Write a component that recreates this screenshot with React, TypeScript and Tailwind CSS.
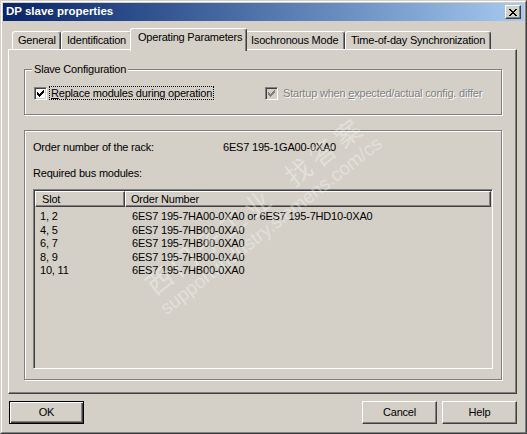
import React from 'react';

const raised =
  'border border-t-white border-l-white border-r-[#404040] border-b-[#404040] shadow-[inset_-1px_-1px_0_#808080]';
const etched = 'border border-[#808080] shadow-[inset_1px_1px_0_#fff,1px_1px_0_#fff]';
const sunken =
  'border border-t-[#808080] border-l-[#808080] border-r-white border-b-white shadow-[inset_1px_1px_0_#404040,inset_-1px_-1px_0_#d4d0c8]';

// classic 7x7 check mark, one column of 3px per x
const checkCols = [2, 3, 4, 3, 2, 1, 0];

const CheckBox = ({ disabled }: { disabled?: boolean }) => (
  <span
    className={`flex h-[13px] w-[13px] shrink-0 items-center justify-center ${sunken} ${
      disabled ? 'bg-[#d4d0c8]' : 'bg-white'
    }`}
  >
    <svg width="7" height="7" viewBox="0 0 7 7" shapeRendering="crispEdges">
      {checkCols.map((y, x) => (
        <rect key={x} x={x} y={y} width="1" height="3" fill={disabled ? '#808080' : '#000'} />
      ))}
    </svg>
  </span>
);

// 8x7 close glyph
const closeRows = [
  [0, 1, 6, 7],
  [1, 2, 5, 6],
  [2, 3, 4, 5],
  [3, 4],
  [2, 3, 4, 5],
  [1, 2, 5, 6],
  [0, 1, 6, 7],
];

const rows = [
  { slot: '1, 2', order: '6ES7 195-7HA00-0XA0 or 6ES7 195-7HD10-0XA0' },
  { slot: '4, 5', order: '6ES7 195-7HB00-0XA0' },
  { slot: '6, 7', order: '6ES7 195-7HB00-0XA0' },
  { slot: '8, 9', order: '6ES7 195-7HB00-0XA0' },
  { slot: '10, 11', order: '6ES7 195-7HB00-0XA0' },
];

const tabBase =
  'h-[18px] shrink-0 rounded-t-[3px] border-t border-l border-r border-t-white border-l-white border-r-[#404040] shadow-[inset_-1px_0_0_#808080] pl-[5px] pt-[2px] leading-[13px] whitespace-nowrap';

export default function App() {
  return (
    <div className="relative h-[434px] w-[527px] overflow-hidden bg-[#d4d0c8] font-['Liberation_Sans',Arial,sans-serif] text-[11px] tracking-[-0.2px] text-black select-none">
      <div className="flex h-full flex-col border border-t-[#d4d0c8] border-l-[#d4d0c8] border-r-[#404040] border-b-[#404040]">
        <div className="flex h-full flex-col border border-t-white border-l-white border-r-[#808080] border-b-[#808080] p-px">
          {/* Title bar */}
          <div className="flex h-[18px] shrink-0 items-center bg-gradient-to-r from-[#0a246a] to-[#a6caf0] pl-[3px]">
            <span className="flex-1 text-[11.5px] font-bold tracking-normal text-white">DP slave properties</span>
            <span className={`mr-[3px] flex h-[14px] w-[16px] items-center justify-center bg-[#d4d0c8] ${raised}`}>
              <svg width="8" height="7" viewBox="0 0 8 7" shapeRendering="crispEdges">
                {closeRows.map((xs, y) =>
                  xs.map((x) => <rect key={`${x}-${y}`} x={x} y={y} width="1" height="1" fill="#000" />)
                )}
              </svg>
            </span>
          </div>

          <div className="flex flex-1 flex-col px-[5px] pt-[7px]">
            {/* Tabs */}
            <div className="flex h-[21px] items-end pl-[4px]">
              <div className={`${tabBase} w-[49px]`}>General</div>
              <div className={`${tabBase} w-[71px]`}>Identification</div>
              <div className="relative z-10 -mx-[2px] -mb-[2px] h-[23px] w-[117px] shrink-0 rounded-t-[3px] border-t border-l border-r border-t-white border-l-white border-r-[#404040] bg-[#d4d0c8] pl-[7px] pt-[2px] leading-[13px] whitespace-nowrap shadow-[inset_-1px_0_0_#808080]">
                Operating Parameters
              </div>
              <div className={`${tabBase} w-[100px]`}>Isochronous Mode</div>
              <div className={`${tabBase} w-[146px]`}>Time-of-day Synchronization</div>
            </div>

            {/* Tab panel */}
            <div className={`h-[345px] w-[509px] pl-[15px] pt-[13px] ${raised}`}>
              <fieldset className={`w-[478px] px-[7px] pt-[10px] pb-[14px] ${etched}`}>
                <legend className="bg-[#d4d0c8] px-[2px] leading-[13px]">Slave Configuration</legend>
                <div className="flex h-[14px] items-center">
                  <div className="flex w-[233px] shrink-0 items-center pl-[2px]">
                    <CheckBox />
                    <span className="ml-[2px] border border-dotted border-black px-[1px] leading-[12px] whitespace-nowrap">
                      <span className="underline">R</span>eplace modules during operation
                    </span>
                  </div>
                  <div className="flex items-center">
                    <CheckBox disabled />
                    <span className="ml-[4px] px-[1px] leading-[12px] whitespace-nowrap text-[#808080] [text-shadow:1px_1px_0_#fff]">
                      Startup when <span className="underline">e</span>xpected/actual config. differ
                    </span>
                  </div>
                </div>
              </fieldset>

              <div className={`mt-[15px] h-[250px] w-[478px] px-[8px] pt-[10px] ${etched}`}>
                <div className="flex leading-[13px]">
                  <span className="w-[190px] shrink-0">Order number of the rack:</span>
                  <span>6ES7 195-1GA00-0XA0</span>
                </div>
                <div className="mt-[13px] leading-[13px]">Required bus modules:</div>

                <div className={`mt-[9px] h-[180px] w-[460px] bg-[#d4d0c8] p-px ${sunken}`}>
                  <div className="flex h-[16px] leading-[13px]">
                    <div className={`w-[90px] shrink-0 pl-[6px] pt-px ${raised}`}>Slot</div>
                    <div className={`flex-1 pl-[5px] pt-px ${raised}`}>Order Number</div>
                  </div>
                  <div className="pt-[3px]">
                    {rows.map((r) => (
                      <div key={r.slot} className="flex h-[13.5px] leading-[13.5px] whitespace-nowrap">
                        <span className="w-[90px] shrink-0 pl-[5px]">{r.slot}</span>
                        <span className="pl-[7px]">{r.order}</span>
                      </div>
                    ))}
                  </div>
                </div>
              </div>
            </div>

            {/* Buttons */}
            <div className="mt-[7px] flex w-[509px]">
              <button className="ml-[1px] h-[23px] w-[75px] border border-black bg-[#d4d0c8] shadow-[inset_1px_1px_0_#fff,inset_-1px_-1px_0_#404040,inset_-2px_-2px_0_#808080]">
                OK
              </button>
              <div className="flex-1" />
              <button className={`h-[23px] w-[75px] bg-[#d4d0c8] ${raised}`}>Cancel</button>
              <button className={`ml-[5px] h-[23px] w-[75px] bg-[#d4d0c8] ${raised}`}>Help</button>
            </div>
          </div>
        </div>
      </div>

      {/* Watermark over the dialog */}
      <div className="pointer-events-none absolute left-[262px] top-[214px] -translate-x-1/2 -translate-y-1/2 -rotate-[38deg] text-center whitespace-nowrap text-white/35">
        <div className="font-['Noto_Sans_CJK_SC',sans-serif] text-[26px] leading-[30px] tracking-[5px]">
          西门子工业&nbsp;&nbsp;找答案
        </div>
        <div className="font-['Liberation_Sans',Arial,sans-serif] text-[19px] leading-[24px] tracking-normal">
          support.industry.siemens.com/cs
        </div>
      </div>
    </div>
  );
}
